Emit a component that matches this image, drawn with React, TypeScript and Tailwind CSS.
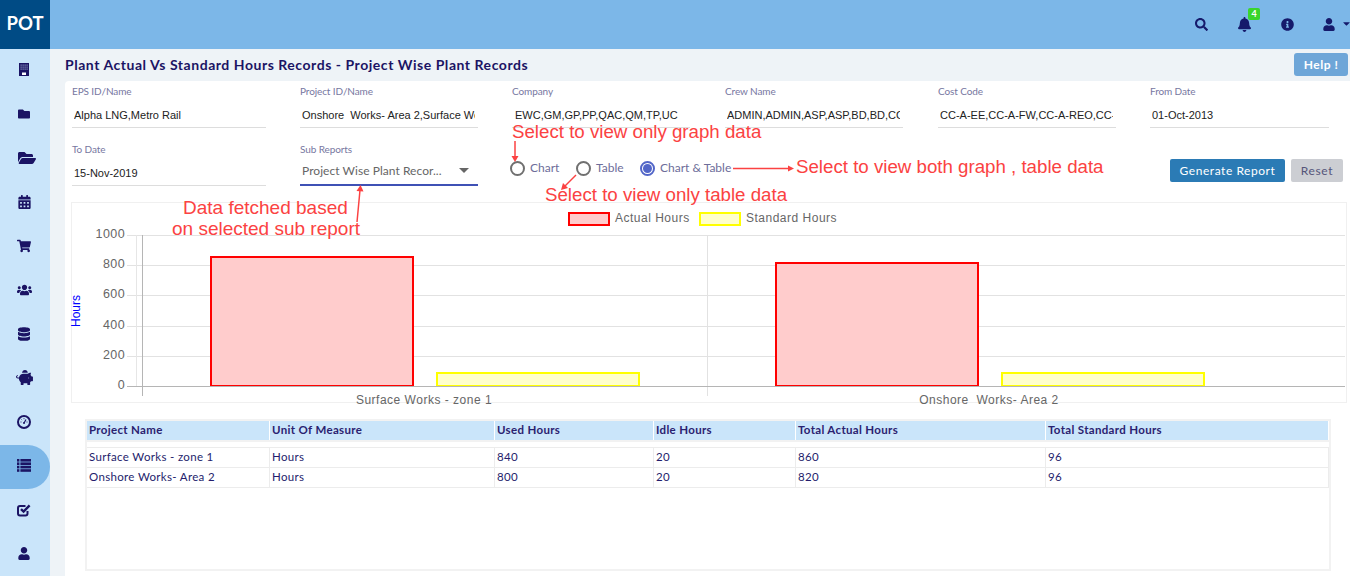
import React from "react";
import { FaFolder, FaFolderOpen, FaCalendarAlt, FaShoppingCart, FaUsers, FaDatabase, FaPiggyBank, FaUser, FaSearch, FaBell, FaInfoCircle, FaCaretDown } from "react-icons/fa";

function Building() {
  return (
    <svg width="10" height="13" viewBox="0 0 10 13" className="text-[#1b1464]">
      <rect width="10" height="13" fill="currentColor" />
      {[1.5, 3.5, 5.5, 7.5].map((x) =>
        [1.5, 3.5, 5.5].map((y) => <rect key={`${x}${y}`} x={x} y={y} width="1.2" height="1.2" fill="#8f9cc4" />)
      )}
      <rect x="3" y="9.5" width="4" height="2.5" fill="#ffffff" />
    </svg>
  );
}
function Gauge() {
  return (
    <svg width="14" height="14" viewBox="0 0 14 14" fill="none" stroke="currentColor">
      <circle cx="7" cy="7" r="6" strokeWidth="2" />
      <path d="M7 8L9 4.5" strokeWidth="1.2" />
      <path d="M3.5 7h1M7 3.2v1M4.5 4.5l.6.6M9.5 7h1" strokeWidth="0.9" />
      <circle cx="7" cy="8" r="1" fill="currentColor" stroke="none" />
    </svg>
  );
}
function Checked() {
  return (
    <svg width="14" height="14" viewBox="0 0 14 14" fill="none" stroke="currentColor">
      <path d="M10.5 8v2.5a2 2 0 0 1-2 2H3a2 2 0 0 1-2-2V5a2 2 0 0 1 2-2h5.5" strokeWidth="2" />
      <path d="M4 6.2L6.6 8.6L12.6 2.4" strokeWidth="2.4" />
    </svg>
  );
}
function ListIcon() {
  return (
    <svg width="14" height="13" viewBox="0 0 14 13" fill="currentColor">
      {[0, 3.4, 6.8, 10.2].map((y) => (
        <g key={y}>
          <rect x="0" y={y} width="2.4" height="2.6" />
          <rect x="3.4" y={y} width="10.6" height="2.6" />
        </g>
      ))}
    </svg>
  );
}

const nav: React.ReactNode[] = [
  <Building />,
  <FaFolder className="w-[12px] h-[12px]" />,
  <FaFolderOpen className="w-[18px] h-[16px] ml-[5px]" />,
  <FaCalendarAlt className="w-[13px] h-[14px]" />,
  <FaShoppingCart className="w-[14px] h-[14px]" />,
  <FaUsers className="w-[15px] h-[14px]" />,
  <FaDatabase className="w-[12px] h-[14px]" />,
  <FaPiggyBank className="w-[17px] h-[15px] ml-[1px]" />,
  <Gauge />,
  <ListIcon />,
  <Checked />,
  <FaUser className="w-[12px] h-[13px]" />,
];

function Field({ label, value, w, gap, pad = "pl-[2px]" }: { label: string; value: string; w: string; gap: string; pad?: string }) {
  return (
    <div className={`${w} ${gap} shrink-0`}>
      <div className="h-[20px] text-[10px] leading-[20px] tracking-[-0.1px] text-[#77779f]">{label}</div>
      <div className={`h-[27px] ${pad} pr-[3px] border-b border-[#dddddd]`}>
        <div className="overflow-hidden whitespace-pre font-['Liberation_Sans'] text-[11px] leading-[28px] text-[#222222]">{value}</div>
      </div>
    </div>
  );
}

function Radio({ label, on }: { label: string; on?: boolean }) {
  return (
    <div className="flex items-center gap-[5px]">
      <span className={`w-[15px] h-[15px] shrink-0 rounded-full border-2 flex items-center justify-center ${on ? "border-[#5266c8]" : "border-[#707070]"}`}>
        {on && <span className="w-[9px] h-[9px] rounded-full bg-[#5266c8]" />}
      </span>
      <span className="text-[12px] text-[#6d6d9a] -mt-[1px]">{label}</span>
    </div>
  );
}

const cols = "grid grid-cols-[183px_225px_159px_142px_250px_1fr]";
const head = ["Project Name", "Unit Of Measure", "Used Hours", "Idle Hours", "Total Actual Hours", "Total Standard Hours"];
const rows = [
  ["Surface Works - zone 1", "Hours", "840", "20", "860", "96"],
  ["Onshore Works- Area 2", "Hours", "800", "20", "820", "96"],
];

function Note({ className, children }: { className: string; children: React.ReactNode }) {
  return <div className={`absolute font-['Liberation_Sans'] leading-[22px] text-[#fb4242] whitespace-nowrap ${className}`}>{children}</div>;
}

function Chart() {
  const ys = [[235, "1000"], [265, "800"], [295, "600"], [326, "400"], [356, "200"], [386, "0"]] as const;
  const f = "'Liberation Sans', Arial, sans-serif";
  return (
    <svg width="1274" height="199" viewBox="72 203 1274 199" className="block overflow-visible">
      {ys.map(([y, t]) => (
        <g key={t}>
          <line x1="127" x2="1345" y1={y + 0.5} y2={y + 0.5} stroke={t === "0" ? "#b5b5b5" : "#e2e2e2"} />
          <text x="125" y={y + 3} textAnchor="end" fontFamily={f} fontSize="12.5" fill="#666" letterSpacing="0.4">{t}</text>
        </g>
      ))}
      <line x1="136.5" x2="136.5" y1="235" y2="386" stroke="#e6e6e6" />
      <line x1="142.5" x2="142.5" y1="235" y2="396" stroke="#b5b5b5" />
      <line x1="707.5" x2="707.5" y1="235" y2="396" stroke="#e2e2e2" />
      <rect x="211" y="257" width="202" height="129" fill="#ffcccc" stroke="#ff0000" strokeWidth="2" />
      <rect x="437" y="373" width="202" height="13" fill="#ffffcc" stroke="#ffff00" strokeWidth="2" />
      <rect x="776" y="263" width="202" height="123" fill="#ffcccc" stroke="#ff0000" strokeWidth="2" />
      <rect x="1002" y="373" width="202" height="13" fill="#ffffcc" stroke="#ffff00" strokeWidth="2" />
      <line x1="127" x2="1345" y1="386.5" y2="386.5" stroke="#b5b5b5" />
      <rect x="569" y="213" width="40" height="12" fill="#ffcccc" stroke="#ff0000" strokeWidth="2" />
      <text x="615" y="222" fontFamily={f} fontSize="12" fill="#666" letterSpacing="0.5">Actual Hours</text>
      <rect x="700" y="213" width="40" height="12" fill="#ffffcc" stroke="#ffff00" strokeWidth="2" />
      <text x="746" y="222" fontFamily={f} fontSize="12" fill="#666" letterSpacing="0.5">Standard Hours</text>
      <text x="424" y="404" textAnchor="middle" fontFamily={f} fontSize="12" fill="#666" letterSpacing="0.5" xmlSpace="preserve">Surface Works - zone 1</text>
      <text x="989" y="404" textAnchor="middle" fontFamily={f} fontSize="12" fill="#666" letterSpacing="0.5" xmlSpace="preserve">Onshore  Works- Area 2</text>
      <text transform="translate(80 311) rotate(-90)" textAnchor="middle" fontFamily={f} fontSize="12" fill="#0000ff">Hours</text>
    </svg>
  );
}

export default function App() {
  return (
    <div className="relative w-[1350px] h-[576px] overflow-hidden bg-[#eef3f7] font-['Lato',sans-serif] flex flex-col">
      <header className="h-[49px] shrink-0 bg-[#7cb7e8] flex items-center">
        <div className="w-[50px] h-full bg-[#004b85] text-white text-[18.5px] font-bold flex items-center justify-center pb-[2px]">POT</div>
        <div className="flex-1" />
        <div className="flex items-center text-[#151a6b]">
          <FaSearch className="w-[13px] h-[13px] mr-[30px]" />
          <div className="relative mr-[30px]">
            <FaBell className="w-[13px] h-[15px]" />
            <span className="absolute -top-[9px] left-[10px] w-[12px] h-[12px] rounded-[2px] bg-[#3ad52c] text-white text-[9px] font-bold leading-[12px] text-center">4</span>
          </div>
          <FaInfoCircle className="w-[13px] h-[13px] mr-[29px]" />
          <FaUser className="w-[12px] h-[13px] mr-[6px]" />
          <FaCaretDown className="w-[11px] h-[11px] -mr-[2px] -mt-[2px]" />
        </div>
      </header>
      <div className="flex flex-1 min-h-0">
        <aside className="w-[50px] shrink-0 bg-[#cae5fa]">
          {nav.map((node, i) => (
            <div key={i} className={`h-[44px] flex items-center justify-center pr-[2px] pb-[3px] text-[#1b1464] ${i === 9 ? "bg-[#7cb7e8] rounded-r-[22px]" : ""}`}>
              {node}
            </div>
          ))}
        </aside>
        <main className="flex-1 min-w-0 pl-[15px]">
          <div className="h-[32px] flex items-center justify-between pr-[2px]">
            <h1 className="text-[14px] font-bold tracking-[0.54px] text-[#1b1464] -mt-[1px]">Plant Actual Vs Standard Hours Records - Project Wise Plant Records</h1>
            <button className="w-[54px] h-[23px] mt-[-1px] rounded-[3px] bg-[#6ea6d8] text-white text-[12px] font-bold tracking-[0.5px]">Help !</button>
          </div>
          <section className="h-[495px] bg-white rounded-tl-[4px] pl-[7px]">
            <div className="flex">
              <Field label="EPS ID/Name" value="Alpha LNG,Metro Rail" w="w-[194px]" gap="mr-[34px]" />
              <Field label="Project ID/Name" value="Onshore  Works- Area 2,Surface Works - zone 1" w="w-[178px]" gap="mr-[34px]" />
              <Field label="Company" value="EWC,GM,GP,PP,QAC,QM,TP,UC" w="w-[178px]" gap="mr-[35px]" pad="pl-[3px]" />
              <Field label="Crew Name" value="ADMIN,ADMIN,ASP,ASP,BD,BD,CC,CC,DR,DR" w="w-[178px]" gap="mr-[35px]" />
              <Field label="Cost Code" value="CC-A-EE,CC-A-FW,CC-A-REO,CC-A-SC" w="w-[178px]" gap="mr-[34px]" />
              <Field label="From Date" value="01-Oct-2013" w="w-[179px]" gap="" />
            </div>
            <div className="flex mt-[11px] h-[63px]">
              <Field label="To Date" value="15-Nov-2019" w="w-[194px]" gap="mr-[34px]" />
              <div className="w-[178px] shrink-0 mr-[32px]">
                <div className="h-[20px] text-[10px] leading-[20px] tracking-[-0.1px] text-[#77779f]">Sub Reports</div>
                <div className="h-[27px] border-b-2 border-[#3f51b5] flex items-center justify-between pl-[2px] pr-[9px] pb-[2px] text-[12px] tracking-[0.05px] text-[#666666]">
                  <span>Project Wise Plant Recor...</span>
                  <span className="w-0 h-0 border-x-[5px] border-x-transparent border-t-[5px] border-t-[#666666]" />
                </div>
              </div>
              <div className="flex items-start pt-[21px] h-fit">
                <div className="w-[66px]"><Radio label="Chart" /></div>
                <div className="w-[64px]"><Radio label="Table" /></div>
                <Radio label="Chart & Table" on />
              </div>
              <div className="flex-1" />
              <div className="flex gap-[6px] pt-[20px] pr-[7px] h-fit">
                <button className="w-[115px] h-[23px] rounded-[2px] bg-[#2b7bb5] text-white text-[12px] tracking-[0.55px]">Generate Report</button>
                <button className="w-[52px] h-[23px] rounded-[2px] bg-[#ccced3] text-[#55557a] text-[12px] tracking-[0.6px]">Reset</button>
              </div>
            </div>
            <div className="-ml-[1px] border border-[#f0f0f0] w-[1276px] h-[201px]">
              <Chart />
            </div>
            <div className="ml-[13px] mt-[16px] w-[1246px] h-[152px] border-2 border-[#f2f2f2] text-[11.5px] tracking-[0.33px]">
              <div className={`${cols} h-[19px]`}>
                {head.map((h) => (
                  <div key={h} className="bg-[#cae5fa] border-r border-white pl-[2px] leading-[18px] font-bold text-[#2a2270]">{h}</div>
                ))}
              </div>
              <div className="h-[2px] bg-[#f2f2f2]" />
              <div className="h-[5px] border-b border-[#ececec] box-content" />
              {rows.map((r) => (
                <div key={r[0]} className={`${cols} border-b border-[#ececec] h-[20px]`}>
                  {r.map((c, i) => (
                    <div key={i} className="pl-[2px] leading-[17px] text-[#241d6c] border-r border-[#ececec]">{c}</div>
                  ))}
                </div>
              ))}
            </div>
          </section>
        </main>
      </div>

      <Note className="left-[512px] top-[121px] text-[18.7px]">Select to view only graph data</Note>
      <Note className="left-[796px] top-[156px] text-[18.7px]">Select to view both graph , table data</Note>
      <Note className="left-[545px] top-[184px] text-[18.7px]">Select to view only table data</Note>
      <Note className="left-[183px] top-[197px] text-[19px]">Data fetched based</Note>
      <Note className="left-[172px] top-[218px] text-[19px]">on selected sub report</Note>
      <svg className="absolute inset-0 pointer-events-none" width="1350" height="576" fill="none" stroke="#fb4242" strokeWidth="1.5">
        <path d="M515 141V158" />
        <path d="M511.5 156H518.5L515 162Z" fill="#fb4242" stroke="none" />
        <path d="M576 175L565 186" />
        <path d="M563 183L568 188L561 190Z" fill="#fb4242" stroke="none" />
        <path d="M733 168.5H790" />
        <path d="M788 165.5L794 168.5L788 171.5Z" fill="#fb4242" stroke="none" />
        <path d="M357 222L360 190" />
        <path d="M356.5 191L363.5 191.5L360.5 185Z" fill="#fb4242" stroke="none" />
      </svg>
    </div>
  );
}
